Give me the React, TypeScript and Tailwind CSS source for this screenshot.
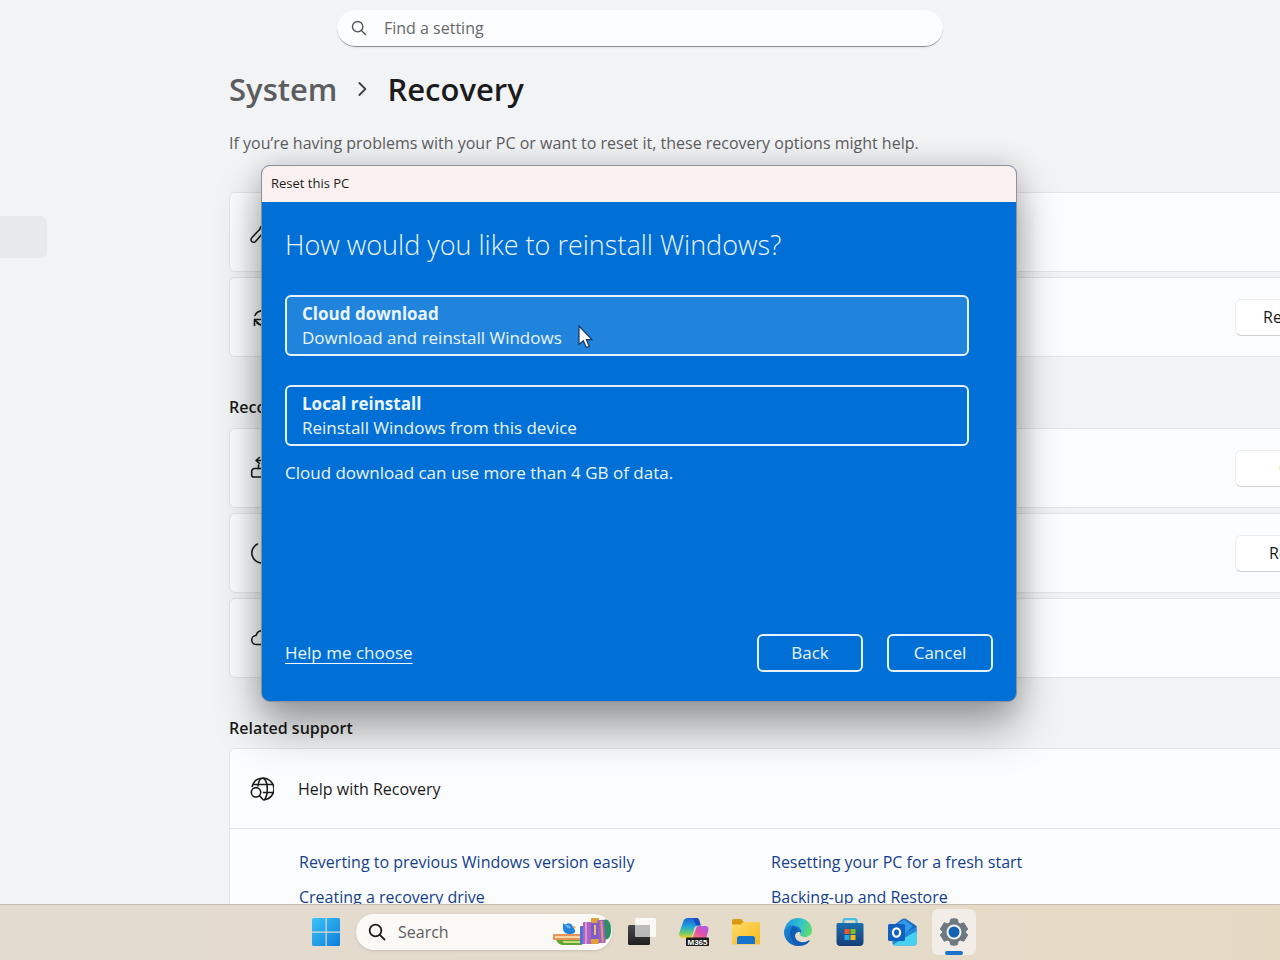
import type { ReactNode } from 'react';

// ─── Outline icons ────────────────────────────────────────────────────────────

function Outline({ children, className = 'size-6' }: { children: ReactNode; className?: string }) {
  return (
    <svg
      viewBox="0 0 24 24"
      fill="none"
      stroke="currentColor"
      strokeWidth="1.6"
      strokeLinecap="round"
      strokeLinejoin="round"
      className={className}
      aria-hidden="true"
    >
      {children}
    </svg>
  );
}

const WrenchIcon = () => (
  <Outline>
    <path d="M14 4.5a6 6 0 0 1 5-1L15.500 7 18 9.500 21.500 6a6 6 0 0 1-8.500 7L5.500 21.500a2.600 2.600 0 0 1-3.700-3.700L10 9a6 6 0 0 1 4-4.500z" />
  </Outline>
);

const ResetIcon = () => (
  <Outline>
    <path d="M5 10.500a8 8 0 0 1 14.500 0M19 15.500A8 8 0 0 1 7 18M4.500 20.500v-6h6M4.500 14.500l6.500 6" />
  </Outline>
);

const GoBackIcon = () => (
  <Outline>
    <path d="M9.500 1.500 6 4.500l3.500 3M6 4.500h8v5M8.500 12.500V9" />
    <path d="M4.500 12.500H19a2.500 2.500 0 0 1 2.500 2.500v3.500A2.500 2.500 0 0 1 19 21H3.500A1.800 1.800 0 0 1 1.700 19v-3.700a2.800 2.800 0 0 1 2.800-2.800z" />
  </Outline>
);

const PowerIcon = () => (
  <Outline>
    <path d="M7.500 3a10 10 0 0 0 4.500 19 10 10 0 0 0 4.500-19M14 2v8" />
  </Outline>
);

const CloudIcon = () => (
  <Outline>
    <path d="M6.500 18.500a4.500 4.500 0 0 1-.5-9 6.500 6.500 0 0 1 12.500 0 4.500 4.500 0 0 1-.5 9z" />
  </Outline>
);

const GlobeSearchIcon = () => (
  <Outline>
    <path d="M2.200 9.500C3.500 4.500 7.500 1.200 12.500 1.200A10.800 10.800 0 0 1 14.500 22.700M3.500 7.500h18M13.500 15.500h9" />
    <path d="M8 9c.5-5 2.500-7.800 4.500-7.800 3 0 4.800 5 4.800 10.800 0 4.500-1 8.500-2.800 10.700" />
    <circle cx="6" cy="15.300" r="4.700" />
    <path d="m9.500 18.800 3.700 4" />
  </Outline>
);

const SearchIcon = ({ className }: { className?: string }) => (
  <Outline className={className}>
    <circle cx="10" cy="10" r="7.800" />
    <path d="m15.700 15.700 6.300 6.300" />
  </Outline>
);

// ─── Taskbar icons ────────────────────────────────────────────────────────────

const StartIcon = () => (
  <svg viewBox="0 0 28 28" className="size-7" aria-hidden="true">
    <defs>
      <linearGradient id="start" x1="0" y1="0" x2="1" y2="1">
        <stop offset="0" stopColor="#3cc4f8" />
        <stop offset="1" stopColor="#0a7edc" />
      </linearGradient>
    </defs>
    <path
      fill="url(#start)"
      d="M1.500 0H13.500V13.500H0V1.500A1.500 1.500 0 0 1 1.500 0zM14.700 0H26.500A1.500 1.500 0 0 1 28 1.500V13.500H14.700zM0 14.700H13.500V28H1.500A1.500 1.500 0 0 1 0 26.500zM14.700 14.700H28V26.500A1.500 1.500 0 0 1 26.500 28H14.700z"
    />
  </svg>
);

const BooksIcon = () => (
  <svg viewBox="0 0 60 32" className="h-8 w-15" aria-hidden="true">
    {/* flat pile with the bird on top */}
    <path d="M4 23h26v6H12c-4 0-7-2-8-6z" fill="#5fa534" />
    <path d="M10 25h20v2H12z" fill="#c6dd7c" />
    <path d="M2 18h26a1 1 0 0 1 1 1v5H2a1 1 0 0 1-1-1v-4a1 1 0 0 1 1-1z" fill="#e3955c" />
    <path d="M3 20h26v2H3z" fill="#f7d7a6" />
    <path d="M11 7c1 1 2 2 3 1 3-2 6 0 7 3l2 3c1 3-2 4-5 4-4 0-7-2-7-6z" fill="#2382dc" />
    <path d="M13 9c2-1 5 0 6 3-2 1-5 0-6-3z" fill="#63b3f2" />
    <path d="m21 10 3 1-2 2z" fill="#e9a13b" />
    {/* standing books */}
    <path d="M52 4c4-2 7 3 7 10s-3 11-7 9z" fill="#2a8f62" />
    <rect x="28" y="10" width="5" height="18" rx="1" fill="#4c74d8" />
    <rect x="31" y="6" width="9" height="22" rx="1" fill="#b163c2" />
    <rect x="33" y="6" width="2" height="22" fill="#dc97cf" />
    <rect x="39" y="2" width="8" height="26" rx="1" fill="#7b5bc9" />
    <path d="M39 3a1 1 0 0 1 1-1h6a1 1 0 0 1 1 1v4h-8zM39 23h8v4a1 1 0 0 1-1 1h-6a1 1 0 0 1-1-1z" fill="#e0a03c" />
    <rect x="42" y="9" width="2" height="10" fill="#e9c46a" />
    <rect x="46" y="4" width="7" height="23" rx="1" fill="#9a5fc7" transform="rotate(-4 49 16)" />
    <rect x="49" y="5" width="2" height="21" fill="#e29a6a" transform="rotate(-4 49 16)" />
  </svg>
);

const TaskViewIcon = () => (
  <svg viewBox="0 0 28 28" className="size-7" aria-hidden="true">
    <defs>
      <linearGradient id="task-dark" x1="0" y1="0" x2="0" y2="1">
        <stop offset="0" stopColor="#4a4a4a" />
        <stop offset="1" stopColor="#1f1f1f" />
      </linearGradient>
    </defs>
    <rect x="0" y="7" width="22" height="20" rx="1.500" fill="url(#task-dark)" />
    <rect x="7" y="0" width="21" height="19" rx="1.500" fill="#fff" fillOpacity=".82" />
    <path d="M7 7h15v12H8.500A1.500 1.500 0 0 1 7 17.500z" fill="#8c8c8c" fillOpacity=".42" />
  </svg>
);

const CopilotIcon = () => (
  <svg viewBox="0 0 30 28" className="h-7 w-[30px]" aria-hidden="true">
    <defs>
      <linearGradient id="cop-a" x1="0" y1="0" x2="0" y2="1">
        <stop offset="0" stopColor="#1e5fd8" />
        <stop offset=".45" stopColor="#22a7d8" />
        <stop offset=".75" stopColor="#6ccb6a" />
        <stop offset="1" stopColor="#f3cf2c" />
      </linearGradient>
      <linearGradient id="cop-b" x1="1" y1="0" x2="0" y2="1">
        <stop offset="0" stopColor="#a65cf0" />
        <stop offset=".55" stopColor="#e552a8" />
        <stop offset="1" stopColor="#f58a5c" />
      </linearGradient>
    </defs>
    <path d="M9 0h8c2 0 3 1 3.500 3l1.200 4.500H19c-2 0-3 1-3.600 3L13 18c-.5 1.500-1.500 2-3 2H4c-3 0-4.500-2-3.700-5L4 4C5 1 6.500 0 9 0z" fill="url(#cop-a)" />
    <path d="M14 0h3c2 0 3 1 3.500 3l1.200 4.500H17z" fill="#1b4cc0" />
    <path d="M20 8h6.500c2.500 0 3.500 2 2.800 4.500L27 21H13l4.200-11c.5-1.400 1.300-2 2.800-2z" fill="url(#cop-b)" />
    <rect x="7" y="19.500" width="23" height="8.500" rx="1" fill="#1c1c1c" />
    <text x="18.500" y="26.700" textAnchor="middle" fontSize="8" fontWeight="700" fill="#fff" fontFamily="Liberation Sans, sans-serif">
      M365
    </text>
  </svg>
);

const FolderIcon = () => (
  <svg viewBox="0 0 28 26" className="h-[26px] w-7" aria-hidden="true">
    <defs>
      <linearGradient id="folder" x1="0" y1="0" x2="1" y2="1">
        <stop offset="0" stopColor="#ffdc6b" />
        <stop offset="1" stopColor="#f7b81c" />
      </linearGradient>
    </defs>
    <path d="M0 2a2 2 0 0 1 2-2h7l3 3-3 4H0z" fill="#d99a12" />
    <path d="M0 5.500h8.500L11.500 3H26.500A1.500 1.500 0 0 1 28 4.500V24a1.500 1.500 0 0 1-1.500 1.500H1.500A1.500 1.500 0 0 1 0 24z" fill="url(#folder)" />
    <path d="M7.500 17h13a2.500 2.500 0 0 1 2.500 2.500V25H5v-5.500A2.500 2.500 0 0 1 7.500 17z" fill="#1674cf" />
  </svg>
);

const EdgeIcon = () => (
  <svg viewBox="0 0 28 28" className="size-7" aria-hidden="true">
    <defs>
      <linearGradient id="edge-top" x1="0" y1=".3" x2="1" y2=".5">
        <stop offset="0" stopColor="#1e96e0" />
        <stop offset=".5" stopColor="#2cbfd6" />
        <stop offset="1" stopColor="#5fdc6c" />
      </linearGradient>
      <linearGradient id="edge-low" x1="0" y1="0" x2="1" y2="1">
        <stop offset="0" stopColor="#1b8bdc" />
        <stop offset="1" stopColor="#0b4fa4" />
      </linearGradient>
    </defs>
    <path d="M.5 12C1.500 5 7 0 14 0c8 0 14 5.500 14 12.500 0 4-3 6.500-7 6.500-3 0-5-1-5-2.200 0-.8 1.200-1.300 1.200-3.300 0-3-3-5.500-7-5.500C6 8 2 9.500.5 12z" fill="url(#edge-top)" />
    <path d="M.3 12C1.500 9.500 5 7.500 9 7.500c5 0 8.300 2.800 8.300 6 0 .8-.2 1.400-.5 1.900-1.500-2.500-5.800-1.400-5.800 2.600 0 4.500 4.500 7.500 9 6.500 2-.4 3.500-1.300 4.500-2 .8-.5 1.300 0 .9.700C23 26.500 19 28 14 28 6 28 0 21.500 0 14z" fill="url(#edge-low)" />
    <path d="M9 8c-4 4-4 10-.5 14 2.500 3 6 5 10 5.200C22 26 24.500 24 25.600 22.500c-6 3.800-14.600 1.200-14.600-4.500 0-3 2-4 3.500-4.200C14 11 12.500 8.800 9 8z" fill="#0f5db5" />
  </svg>
);

const StoreIcon = () => (
  <svg viewBox="0 0 28 28" className="size-7" aria-hidden="true">
    <defs>
      <linearGradient id="store" x1="0" y1="0" x2="0" y2="1">
        <stop offset="0" stopColor="#1c6fae" />
        <stop offset="1" stopColor="#163f78" />
      </linearGradient>
    </defs>
    <path d="M7.500 7V3A1.800 1.800 0 0 1 9.300 1.200h9.400A1.800 1.800 0 0 1 20.500 3v4" fill="none" stroke="#46bce6" strokeWidth="2.200" />
    <path d="M.5 6.500A1.500 1.500 0 0 1 2 5h24a1.500 1.500 0 0 1 1.500 1.500V24a4 4 0 0 1-4 4h-19a4 4 0 0 1-4-4z" fill="url(#store)" />
    <rect x="8.500" y="11" width="5" height="5" fill="#f0552b" />
    <rect x="14.500" y="11" width="5" height="5" fill="#83bf20" />
    <rect x="8.500" y="17" width="5" height="5" fill="#22a6ec" />
    <rect x="14.500" y="17" width="5" height="5" fill="#fbba18" />
  </svg>
);

const OutlookIcon = () => (
  <svg viewBox="0 0 30 28" className="h-7 w-[30px]" aria-hidden="true">
    <path d="M4 9 15 1.300a4 4 0 0 1 4.500 0L29.500 8v8H4z" fill="#1668bd" />
    <path d="M10 6 17 1.500 26 8l-7 7h-9z" fill="#2f9be6" />
    <path d="M29.500 8.500V25a2.500 2.500 0 0 1-2.500 2.500H8A2.500 2.500 0 0 1 5.500 25v-3L18 15z" fill="#1f86da" />
    <path d="M6 26.500 29.500 13v12a2.500 2.500 0 0 1-2.500 2.500H8a3 3 0 0 1-2-1z" fill="#45d0f0" />
    <rect x="1" y="6" width="17" height="17" rx="1.500" fill="#0f60bf" />
    <ellipse cx="9.500" cy="14.500" rx="3.600" ry="4.200" fill="none" stroke="#fff" strokeWidth="2.200" />
  </svg>
);

const GearIcon = () => (
  <svg viewBox="0 0 28 28" className="size-7" aria-hidden="true">
    <path
      d="M10.700 1.200 14 .8l3.300.4.900 3.600 2 1.200 3.600-1.200 3.900 6.200-2.600 3 2.600 3-3.900 6.200-3.600-1.200-2 1.200-.9 3.600-3.300.4-3.300-.4-.9-3.600-2-1.200-3.600 1.200L.3 17l2.600-3-2.600-3 3.900-6.200L7.800 6l2-1.200z"
      fill="#6d7880"
      stroke="#6d7880"
      strokeLinejoin="round"
    />
    <circle cx="14" cy="14" r="7.500" fill="#f4f4f2" />
    <circle cx="14" cy="14" r="5.500" fill="#1462b4" />
  </svg>
);

// ─── Settings page ────────────────────────────────────────────────────────────

const CARD = 'flex h-20 items-center rounded-md border border-[#e3e4e6] bg-[#fbfcfd] pl-5';
const CARD_BUTTON = 'h-[37px] w-40 shrink-0 rounded-md border border-[#ebecee] border-b-[#cfd0d2] bg-white text-left';

function Card({ icon, action, pad = '' }: { icon: ReactNode; action?: string; pad?: string }) {
  return (
    <li className={CARD}>
      {icon}
      {action && (
        <div className="ml-auto mr-[18px]">
          <button type="button" className={`${CARD_BUTTON} ${pad}`}>{action}</button>
        </div>
      )}
    </li>
  );
}

function SettingsPage() {
  return (
    <main className="flex-1 overflow-hidden pt-2.5">
      <label className="mx-auto flex h-[37px] w-[606px] max-w-full items-center gap-[17px] rounded-full border-b border-[#8b8d8f] bg-[#fcfdfe] pl-3.5 text-[#4d4f51] shadow-xs">
        <SearchIcon className="size-4 [stroke-width:2]" />
        <input
          type="text"
          placeholder="Find a setting"
          aria-label="Find a setting"
          className="h-full flex-1 bg-transparent outline-none placeholder:text-[#66686a]"
        />
      </label>

      <div className="flex">
        <nav className="w-[229px] shrink-0 pt-[169px]" aria-label="Settings sections">
          <div className="h-[42px] w-[47px] rounded-r-md bg-[#e8e9eb]" />
        </nav>

        {/* the column runs on past the right edge of the window */}
        <div className="-mr-[134px] min-w-0 flex-1">
          <h1 className="mt-[18px] flex h-12 items-center text-[31px] font-semibold">
            <a href="#system" className="text-[#5c5d5f]">System</a>
            <Outline className="mx-4 size-[18px] text-[#3f4041]">
              <path d="m8.500 4 8 8-8 8" strokeWidth="2.400" />
            </Outline>
            <span>Recovery</span>
          </h1>
          <p className="mt-[18px] h-6 leading-6 text-[#5c5d5f]">
            If you’re having problems with your PC or want to reset it, these recovery options might help.
          </p>

          <ul className="mt-[37px] flex flex-col gap-[5px]">
            <Card icon={<WrenchIcon />} />
            <Card icon={<ResetIcon />} action="Reset PC" pad="pl-[27px]" />
          </ul>

          <h2 className="mt-[38px] h-6 font-semibold leading-6">Recovery options</h2>
          <ul className="mt-[9px] flex flex-col gap-[5px]">
            <Card icon={<GoBackIcon />} action="Go back" pad="pl-[43px]" />
            <Card icon={<PowerIcon />} action="Restart now" pad="pl-[33px]" />
            <Card icon={<CloudIcon />} />
          </ul>

          <h2 className="mt-[38px] h-6 font-semibold leading-6">Related support</h2>
          <section className="mt-2 rounded-md border border-[#e3e4e6] bg-[#fbfcfd]">
            <div className="flex h-20 items-center gap-6 border-b border-[#e3e4e6] pl-5">
              <GlobeSearchIcon />
              <span>Help with Recovery</span>
            </div>
            <div className="grid grid-cols-[472px_1fr] gap-y-[11px] py-[21px] pl-[69px] leading-6 text-[#143f8f]">
              <a href="#revert">Reverting to previous Windows version easily</a>
              <a href="#reset">Resetting your PC for a fresh start</a>
              <a href="#drive">Creating a recovery drive</a>
              <a href="#backup">Backing-up and Restore</a>
            </div>
          </section>
        </div>
      </div>
    </main>
  );
}

// ─── Reset dialog ─────────────────────────────────────────────────────────────

const OPTIONS = [
  { title: 'Cloud download', text: 'Download and reinstall Windows', bg: 'bg-[#2184dc]' },
  { title: 'Local reinstall', text: 'Reinstall Windows from this device', bg: '' },
];

const DIALOG_BUTTON = 'h-[38px] w-[106px] rounded-md border-2 border-[#e4f3ff]';

function ResetDialog() {
  return (
    <div
      role="dialog"
      aria-labelledby="reset-title"
      className="absolute left-[calc(50%-379px)] top-[165px] w-[756px] overflow-hidden rounded-[9px] border border-[#8c9299] bg-[#0070d7] text-[#eaf5ff] shadow-[0_26px_44px_rgba(0,0,0,0.34),0_0_30px_rgba(0,0,0,0.16)]"
    >
      <header id="reset-title" className="flex h-9 items-center bg-[#f9f0ef] px-[9px] text-[13px] text-[#1d1d1d]">
        Reset this PC
      </header>
      <div className="px-[23px] pb-[29px] pt-6">
        <h2 className="text-[27px] font-[350] leading-[38px]">How would you like to reinstall Windows?</h2>
        <div className="mr-6 mt-[31px] flex flex-col gap-[29px]">
          {OPTIONS.map((o) => (
            <button
              key={o.title}
              type="button"
              className={`flex h-[61px] flex-col justify-center rounded-md border-2 border-[#e4f3ff] px-[15px] text-left text-[17px] leading-6 ${o.bg}`}
            >
              <span className="font-bold">{o.title}</span>
              <span>{o.text}</span>
            </button>
          ))}
        </div>
        <p className="mt-[15px] text-[17px] leading-6">Cloud download can use more than 4 GB of data.</p>
        <footer className="mt-[149px] flex items-center gap-6 text-[17px]">
          <a href="#help" className="mr-auto underline underline-offset-4">Help me choose</a>
          <button type="button" className={DIALOG_BUTTON}>Back</button>
          <button type="button" className={DIALOG_BUTTON}>Cancel</button>
        </footer>
      </div>
      <svg viewBox="0 0 15 24" className="absolute left-[316px] top-[159px] h-6 w-[15px]" aria-hidden="true">
        <path d="M1 1v18.500l4.300-3.800 3 6.800 3-1.300-2.900-6.500h5.500z" fill="#fff" stroke="#16365e" strokeWidth="1.200" />
      </svg>
    </div>
  );
}

// ─── Taskbar ──────────────────────────────────────────────────────────────────

const APPS = [
  { name: 'Task view', icon: <TaskViewIcon /> },
  { name: 'Copilot', icon: <CopilotIcon /> },
  { name: 'File Explorer', icon: <FolderIcon /> },
  { name: 'Edge', icon: <EdgeIcon /> },
  { name: 'Store', icon: <StoreIcon /> },
  { name: 'Outlook', icon: <OutlookIcon /> },
];

const TASK_BUTTON = 'flex h-[46px] w-11 items-center justify-center';

function Taskbar() {
  return (
    <footer className="flex h-14 shrink-0 items-center justify-center gap-2 border-t border-[#c4bdb0] bg-linear-to-r from-[#e3dbd0] to-[#e4dac4] pb-0.5">
      <button type="button" aria-label="Start" className={TASK_BUTTON}>
        <StartIcon />
      </button>
      <label className="flex h-9 w-64 items-center gap-3 rounded-full bg-[#faf9f6] pl-3 text-[#1c1c1c] shadow-sm">
        <SearchIcon className="size-[18px] [stroke-width:2.4]" />
        <input
          type="text"
          placeholder="Search"
          aria-label="Search"
          className="h-full min-w-0 flex-1 bg-transparent outline-none placeholder:text-[#5e5e5e]"
        />
        <BooksIcon />
      </label>
      {APPS.map((app) => (
        <button key={app.name} type="button" aria-label={app.name} className={TASK_BUTTON}>
          {app.icon}
        </button>
      ))}
      <button type="button" aria-label="Settings" className={`${TASK_BUTTON} relative rounded-md bg-[#f2ede6]`}>
        <GearIcon />
        <span className="absolute inset-x-0 bottom-0 mx-auto h-1 w-[18px] rounded-full bg-[#1a72cc]" />
      </button>
    </footer>
  );
}

export default function App() {
  return (
    <div className="relative flex h-screen flex-col overflow-hidden bg-[#f2f3f5] font-['Open_Sans',sans-serif] text-base text-[#1b1b1b]">
      <SettingsPage />
      <Taskbar />
      <ResetDialog />
    </div>
  );
}
